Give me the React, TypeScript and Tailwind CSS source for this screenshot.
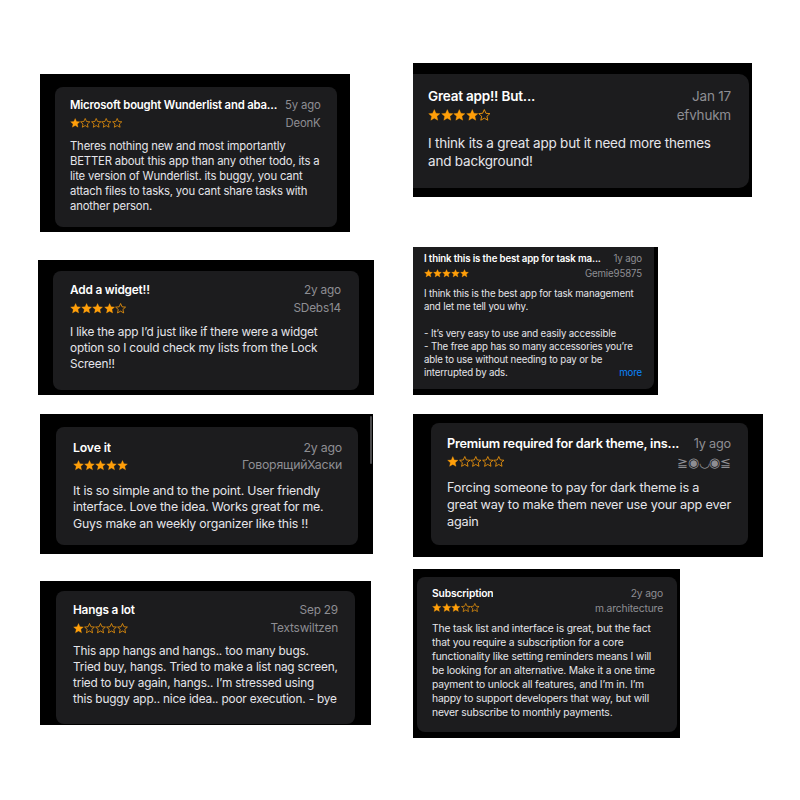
import React from 'react'

type Review = {
  outer: string
  card: string
  text: string
  row2: string
  body: string
  star: string
  rating: number
  title: string
  time: string
  author: string
  lines: string[]
  more?: boolean
  scroll?: boolean
}

const left: Review[] = [
  {
    outer: 'ml-[2px] mt-[74px] w-[310px] h-[158px] pl-[15px] pt-[13px] pr-[14px] pb-[5px]',
    card: 'rounded-[8px] pl-[15px] pr-[16px] pt-[10.5px]',
    text: 'text-[11.3px] leading-[15px]',
    row2: 'mt-[3px]',
    body: 'mt-[8px]',
    star: 'w-[10.4px] h-[10.4px]',
    rating: 1,
    title: 'Microsoft bought Wunderlist and aba...',
    time: '5y ago',
    author: 'DeonK',
    lines: [
      'Theres nothing new and most importantly',
      'BETTER about this app than any other todo, its a',
      'lite version of Wunderlist. its buggy, you cant',
      'attach files to tasks, you cant share tasks with',
      'another person.',
    ],
  },
  {
    outer: 'mt-[28px] w-[336px] h-[135px] pl-[15px] pt-[11px] pr-[15px] pb-[5px]',
    card: 'rounded-[8px] pl-[17px] pr-[18px] pt-[12px]',
    text: 'text-[11.8px] leading-[15.7px]',
    row2: 'mt-[2px]',
    body: 'mt-[9px]',
    star: 'w-[11.2px] h-[11.2px]',
    rating: 4,
    title: 'Add a widget!!',
    time: '2y ago',
    author: 'SDebs14',
    lines: [
      'I like the app I’d just like if there were a widget',
      'option so I could check my lists from the Lock',
      'Screen!!',
    ],
  },
  {
    outer: 'ml-[2px] mt-[19px] w-[333px] h-[140px] pl-[16px] pt-[13px] pr-[15px] pb-[9px]',
    card: 'rounded-[8px] pl-[17px] pr-[16px] pt-[13px]',
    text: 'text-[12.3px] leading-[16.4px]',
    row2: 'mt-[1px]',
    body: 'mt-[9px]',
    star: 'w-[11px] h-[11px]',
    rating: 5,
    title: 'Love it',
    time: '2y ago',
    author: 'ГоворящийХаски',
    lines: [
      'It is so simple and to the point. User friendly',
      'interface. Love the idea. Works great for me.',
      'Guys make an weekly organizer like this !!',
    ],
    scroll: true,
  },
  {
    outer: 'ml-[2px] mt-[27px] w-[331px] h-[144px] pl-[16px] pt-[10px] pr-[16px] pb-[1px]',
    card: 'rounded-[8px] pl-[17px] pr-[17px] pt-[12px]',
    text: 'text-[11.8px] leading-[15.7px]',
    row2: 'mt-[2px]',
    body: 'mt-[8px]',
    star: 'w-[11px] h-[11px]',
    rating: 1,
    title: 'Hangs a lot',
    time: 'Sep 29',
    author: 'Textswiltzen',
    lines: [
      'This app hangs and hangs.. too many bugs.',
      'Tried buy, hangs. Tried to make a list nag screen,',
      'tried to buy again, hangs.. I’m stressed using',
      'this buggy app.. nice idea.. poor execution. - bye',
    ],
  },
]

const right: Review[] = [
  {
    outer: 'mt-[63px] w-[339px] h-[134px] pt-[11px] pr-[3px] pb-[9px]',
    card: 'rounded-r-[10px] pl-[15px] pr-[18px] pt-[13px]',
    text: 'text-[13.5px] leading-[18px]',
    row2: 'mt-[1px]',
    body: 'mt-[10px]',
    star: 'w-[12.6px] h-[12.6px]',
    rating: 4,
    title: 'Great app!! But...',
    time: 'Jan 17',
    author: 'efvhukm',
    lines: ['I think its a great app but it need more themes', 'and background!'],
  },
  {
    outer: 'mt-[50px] w-[245px] h-[148px] pr-[4px] pb-[6px]',
    card: 'rounded-br-[8px] pl-[11px] pr-[12px] pt-[5px]',
    text: 'text-[9.7px] leading-[13.2px]',
    row2: 'mt-[1.5px]',
    body: 'mt-[7px]',
    star: 'w-[9px] h-[9px]',
    rating: 5,
    title: 'I think this is the best app for task ma...',
    time: '1y ago',
    author: 'Gemie95875',
    lines: [
      'I think this is the best app for task management',
      'and let me tell you why.',
      '',
      '- It’s very easy to use and easily accessible',
      '- The free app has so many accessories you’re',
      'able to use without needing to pay or be',
      'interrupted by ads.',
    ],
    more: true,
  },
  {
    outer: 'mt-[19px] w-[350px] h-[143px] pl-[18px] pt-[9px] pr-[18px] pb-[12px]',
    card: 'rounded-[8px] pl-[16px] pr-[17px] pt-[11.5px]',
    text: 'text-[12.7px] leading-[17px]',
    row2: 'mt-[2px]',
    body: 'mt-[8px]',
    star: 'w-[11.6px] h-[11.6px]',
    rating: 1,
    title: 'Premium required for dark theme, ins...',
    time: '1y ago',
    author: '≧◉◡◉≦',
    lines: [
      'Forcing someone to pay for dark theme is a',
      'great way to make them never use your app ever',
      'again',
    ],
  },
  {
    outer: 'mt-[12px] w-[267px] h-[169px] pl-[4px] pt-[8px] pr-[3px] pb-[6px]',
    card: 'rounded-[8px] pl-[15px] pr-[14px] pt-[9px]',
    text: 'text-[10.3px] leading-[14px]',
    row2: 'mt-[1px]',
    body: 'mt-[6px]',
    star: 'w-[9.6px] h-[9.6px]',
    rating: 3,
    title: 'Subscription',
    time: '2y ago',
    author: 'm.architecture',
    lines: [
      'The task list and interface is great, but the fact',
      'that you require a subscription for a core',
      'functionality like setting reminders means I will',
      'be looking for an alternative. Make it a one time',
      'payment to unlock all features, and I’m in. I’m',
      'happy to support developers that way, but will',
      'never subscribe to monthly payments.',
    ],
  },
]

const Stars = ({ rating, size }: { rating: number; size: string }) => (
  <div className="flex items-center">
    {[1, 2, 3, 4, 5].map((i) => (
      <svg key={i} viewBox="1 1.2 22 22" className={size}>
        <polygon
          points="12,2.2 14.9,8.7 21.8,9.3 16.6,13.9 18.1,20.8 12,17.2 5.9,20.8 7.4,13.9 2.2,9.3 9.1,8.7"
          fill={i <= rating ? '#ff9f0a' : 'none'}
          stroke="#ff9f0a"
          strokeWidth={i <= rating ? 0.6 : 1.5}
          strokeLinejoin="round"
        />
      </svg>
    ))}
  </div>
)

const ReviewShot = ({ r }: { r: Review }) => (
  <div className={`relative flex shrink-0 bg-black ${r.outer}`}>
    <div className={`flex-1 bg-[#1c1c1e] tracking-[-0.015em] ${r.card} ${r.text}`}>
      <div className="flex items-center justify-between gap-2">
        <div className="whitespace-nowrap overflow-hidden font-semibold text-white">{r.title}</div>
        <div className="whitespace-nowrap text-[#8e8e93]">{r.time}</div>
      </div>
      <div className={`flex items-center justify-between ${r.row2}`}>
        <Stars rating={r.rating} size={r.star} />
        <div className="whitespace-nowrap text-[#8e8e93]">{r.author}</div>
      </div>
      <div className={`text-[#e5e5ea] ${r.body}`}>
        {r.lines.map((line, i) => (
          <div key={i} className="flex justify-between whitespace-nowrap">
            <span>{line || '\u00a0'}</span>
            {r.more && i === r.lines.length - 1 && <span className="text-[#0a84ff]">more</span>}
          </div>
        ))}
      </div>
    </div>
    {r.scroll && (
      <div className="absolute right-[1px] top-[2px] w-[2px] h-[48px] rounded-full bg-[#4a4a4c]" />
    )}
  </div>
)

export default function App() {
  return (
    <div className="flex w-[800px] h-[800px] bg-white font-['Inter','Liberation_Sans',sans-serif] antialiased">
      <div className="flex flex-col ml-[38px] w-[337px]">
        {left.map((r, i) => (
          <ReviewShot key={i} r={r} />
        ))}
      </div>
      <div className="flex flex-col ml-[38px]">
        {right.map((r, i) => (
          <ReviewShot key={i} r={r} />
        ))}
      </div>
    </div>
  )
}
